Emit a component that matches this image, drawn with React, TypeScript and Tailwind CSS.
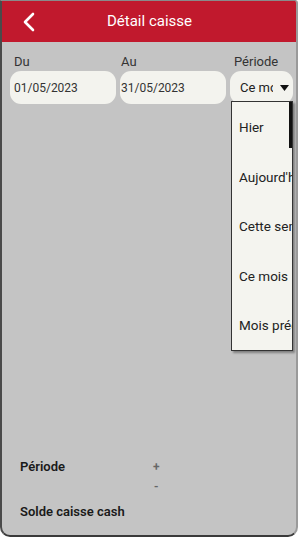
import React from "react";

export default function App() {
  const items = ["Hier", "Aujourd'hui", "Cette semaine", "Ce mois", "Mois précédent"];
  return (
    <div className="w-[300px] h-[540px] bg-white" style={{ fontFamily: "Roboto, 'Liberation Sans', sans-serif" }}>
      <div className="relative w-[298px] h-[537px] flex flex-col bg-[#c4c4c4] border-t border-t-[#8a8a8a] border-l-2 border-l-[#4a4a4a] border-r-[2px] border-r-[#9a9a9a] border-b-2 border-b-[#3a3a3a] rounded-b-[10px] rounded-tr-[3px] overflow-hidden">
        <div className="h-[41px] bg-[#c1192d] flex items-center relative shrink-0">
          <svg className="absolute left-[20px] top-[11px]" width="14" height="20" viewBox="0 0 14 20">
            <path d="M11 2 L3 10 L11 18" stroke="white" strokeWidth="2.6" fill="none" strokeLinecap="round" strokeLinejoin="round" />
          </svg>
          <div className="flex-1 text-center text-white text-[15px] pl-[1px]">Détail caisse</div>
        </div>
        <div className="flex gap-[4px] pl-[8px] pr-[2px] pt-[12px]">
          <div className="flex flex-col w-[106px]">
            <div className="text-[13px] text-[#333] leading-[16px] pl-[4px]">Du</div>
            <div className="mt-[1px] h-[33px] bg-[#f3f3ee] rounded-[11px] flex items-center pl-[4px] text-[12px] text-[#333]">01/05/2023</div>
          </div>
          <div className="flex flex-col w-[106px]">
            <div className="text-[13px] text-[#333] leading-[16px] pl-[1px]">Au</div>
            <div className="mt-[1px] h-[33px] bg-[#f3f3ee] rounded-[11px] flex items-center pl-[1px] text-[12px] text-[#333]">31/05/2023</div>
          </div>
          <div className="flex flex-col w-[63px]">
            <div className="text-[13px] text-[#333] leading-[16px] pl-[4px]">Période</div>
            <div className="mt-[1px] h-[33px] bg-[#f3f3ee] rounded-[11px] flex items-center pl-[10px] pr-[3px] text-[13px] text-[#222]">
              <span className="w-[33px] overflow-hidden whitespace-nowrap">Ce mois</span>
              <svg className="ml-[7px]" width="9" height="6" viewBox="0 0 9 6"><path d="M0 0 L9 0 L4.5 6 Z" fill="#111" /></svg>
            </div>
          </div>
        </div>
        <div className="flex-1" />
        <div className="flex flex-col pl-[18px] pb-[12px] text-[13px] text-[#1a1a1a]">
          <div className="flex items-center h-[20px]">
            <span className="font-semibold w-[133px]">Période</span>
            <span className="text-[#666] font-semibold text-[12px]">+</span>
          </div>
          <div className="flex items-center h-[20px]">
            <span className="w-[134px]" />
            <span className="text-[#666] font-semibold text-[12px]">-</span>
          </div>
          <div className="flex items-center h-[26px] pt-[3px]">
            <span className="font-semibold">Solde caisse cash</span>
          </div>
        </div>
        <div className="absolute left-[229px] top-[100px] w-[62px] h-[250px] bg-[#f4f4ef] border border-[#333] shadow-[2px_2px_2px_rgba(0,0,0,0.35)] overflow-hidden">
          <div className="absolute right-0 top-0 w-[3px] h-[46px] bg-[#111]" />
          <div className="flex flex-col pt-[16px]">
            {items.map((t) => (
              <div key={t} className="h-[49.5px] shrink-0 pl-[7px] text-[13.5px] text-[#222] whitespace-nowrap leading-[18px]">{t}</div>
            ))}
          </div>
        </div>
      </div>
    </div>
  );
}
